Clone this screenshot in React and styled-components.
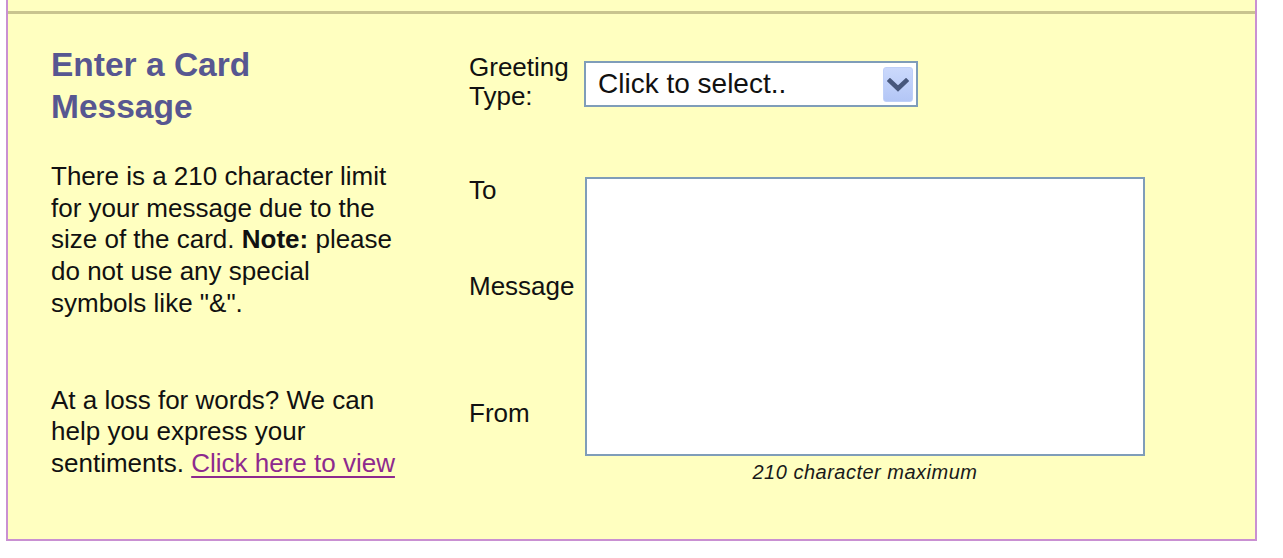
import React from "react";
import styled, { createGlobalStyle } from "styled-components";

const GlobalStyle = createGlobalStyle`
  html, body {
    margin: 0;
    padding: 0;
    background: #ffffff;
  }
  body {
    font-family: "Liberation Sans", Arial, Helvetica, sans-serif;
    color: #111111;
  }
`;

const Panel = styled.div`
  box-sizing: border-box;
  margin-left: 6px;
  width: 1251px;
  height: 541px;
  background: #ffffc0;
  border: 2px solid #c990d2;
  border-top: none;
`;

const TopStrip = styled.div`
  height: 11px;
  border-bottom: 3px solid #c9c48f;
`;

const Content = styled.div`
  display: flex;
  align-items: flex-start;
  padding-left: 43px;
`;

const LeftColumn = styled.div`
  width: 418px;
  flex: none;
  padding-top: 30px;
`;

const Heading = styled.h2`
  margin: 0;
  width: 300px;
  font-size: 33.5px;
  line-height: 42px;
  font-weight: bold;
  color: #575791;
`;

const Paragraph = styled.p`
  margin: ${(p) => p.$top}px 0 0;
  width: 350px;
  font-size: 26px;
  line-height: 31.7px;
  color: #111111;
`;

const Link = styled.a`
  color: #8e2a8e;
  text-decoration: underline;
  text-decoration-thickness: 2px;
  text-underline-offset: 4px;
  cursor: pointer;
`;

const RightColumn = styled.div`
  flex: 1;
  padding-top: 38.5px;
`;

const FormRow = styled.div`
  display: flex;
  align-items: flex-start;
  margin-top: ${(p) => p.$top || 0}px;
`;

const Label = styled.div`
  font-size: 26px;
  line-height: 29px;
  color: #111111;
  margin-top: ${(p) => p.$top || 0}px;
`;

const LabelColumn = styled.div`
  width: 116px;
  flex: none;
  display: flex;
  flex-direction: column;
`;

const SelectBox = styled.div`
  box-sizing: border-box;
  margin-top: 8.5px;
  margin-left: -1px;
  width: 334px;
  height: 46px;
  border: 2px solid #7f9db9;
  background: #ffffff;
  display: flex;
  align-items: center;
  justify-content: space-between;
  padding-left: 12px;
  padding-right: 3px;
  font-size: 28px;
  color: #111111;
  cursor: default;
`;

const ArrowButton = styled.div`
  box-sizing: border-box;
  width: 30px;
  height: 35px;
  margin-top: 1px;
  border-radius: 3px;
  border: 1px solid #bfd0f8;
  background: linear-gradient(#cbd9fc, #b3c6f6);
  display: flex;
  align-items: center;
  justify-content: center;
`;

const ControlColumn = styled.div`
  display: flex;
  flex-direction: column;
  margin-top: 1.5px;
`;

const MessageArea = styled.textarea`
  box-sizing: border-box;
  width: 560px;
  height: 279px;
  border: 2px solid #7f9db9;
  background: #ffffff;
  resize: none;
  outline: none;
  margin: 0;
  padding: 4px;
  font-family: "Liberation Sans", Arial, sans-serif;
  font-size: 22px;
`;

const Caption = styled.div`
  margin-top: 4.5px;
  text-align: center;
  font-size: 20px;
  line-height: 23px;
  font-style: italic;
  letter-spacing: 0.5px;
  color: #1a1a1a;
`;

function Chevron() {
  return (
    <svg width="22" height="14" viewBox="0 0 22 14" aria-hidden="true">
      <polyline
        points="3,3 11,10.5 19,3"
        fill="none"
        stroke="#47577c"
        strokeWidth="4.6"
        strokeLinecap="square"
        strokeLinejoin="miter"
      />
    </svg>
  );
}

export default function App() {
  return (
    <>
      <GlobalStyle />
      <Panel>
        <TopStrip />
        <Content>
          <LeftColumn>
            <Heading>Enter a Card Message</Heading>
            <Paragraph $top={33}>
              There is a 210 character limit for your message due to the size
              of the card. <b>Note:</b> please do not use any special symbols
              like "&amp;".
            </Paragraph>
            <Paragraph $top={65}>
              At a loss for words? We can help you express your sentiments.{" "}
              <Link>Click here to view</Link>
            </Paragraph>
          </LeftColumn>
          <RightColumn>
            <FormRow>
              <LabelColumn>
                <Label>
                  Greeting
                  <br />
                  Type:
                </Label>
              </LabelColumn>
              <SelectBox>
                <span>Click to select..</span>
                <ArrowButton>
                  <Chevron />
                </ArrowButton>
              </SelectBox>
            </FormRow>
            <FormRow $top={65}>
              <LabelColumn>
                <Label>To</Label>
                <Label $top={67}>Message</Label>
                <Label $top={98}>From</Label>
              </LabelColumn>
              <ControlColumn>
                <MessageArea aria-label="Message" />
                <Caption>210 character maximum</Caption>
              </ControlColumn>
            </FormRow>
          </RightColumn>
        </Content>
      </Panel>
    </>
  );
}
